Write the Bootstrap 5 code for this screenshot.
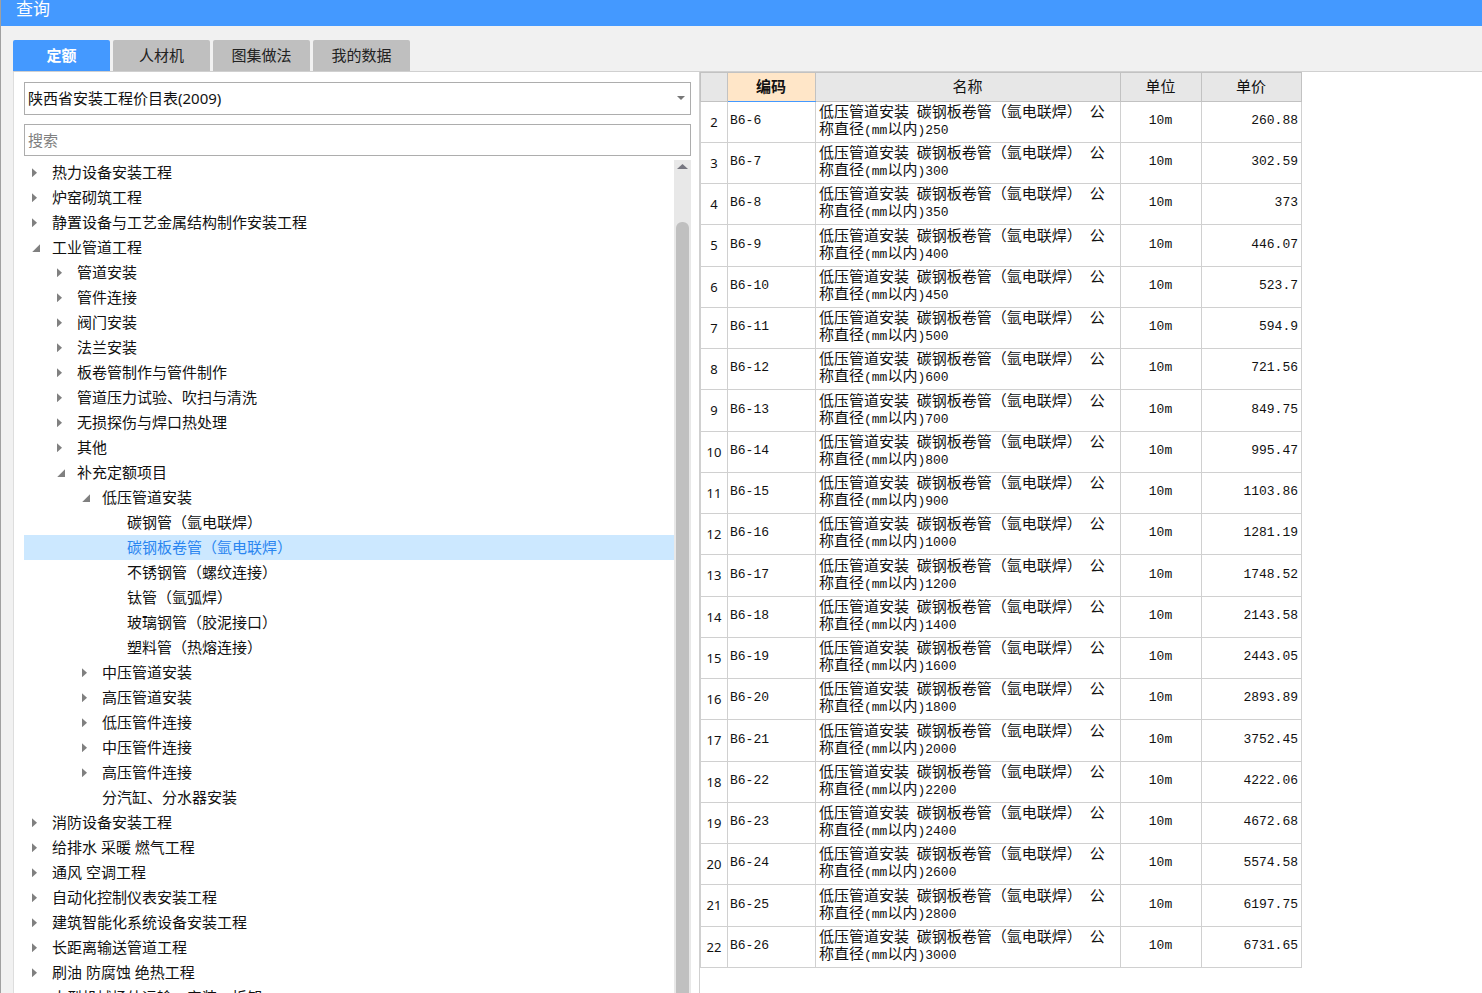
<!DOCTYPE html>
<html lang="zh-CN">
<head>
<meta charset="utf-8">
<meta name="viewport" content="width=device-width, initial-scale=1">
<title>查询</title>
<link href="https://cdn.jsdelivr.net/npm/bootstrap@5.3.0/dist/css/bootstrap.min.css" rel="stylesheet">
<style>
body{font-family:"Noto Sans","Noto Sans CJK SC",sans-serif;font-size:15px;line-height:25px;color:#111;background:#f1f1f1}
.window{border-left:1px solid #a0a0a0}
.titlebar{height:26px;background:#4499ff;color:#fff;font-size:17px;line-height:18px;padding-left:15px}
.workspace{padding:14px 0 0 12px}
.tabs{gap:3px}
.tabs .nav-link{width:97px;height:31px;padding:0;border:0;line-height:31px;border-radius:2px 2px 0 0;background:#bfbfbf;color:#222;text-align:center}
.tabs .nav-link.active{background:#4499ff;color:#fff;font-weight:700}
.panes{display:grid;grid-template-columns:687fr 782fr;grid-template-rows:minmax(0,1fr);border-top:1px solid #d0d0d0;background:#fff;min-height:0}
.catalog{padding:10px 8px 0 10px;border-left:1px solid #ddd;border-right:1px solid #d0d0d0;min-height:0}
.catalog .form-select,.catalog .form-control{height:33px;padding:0 3px;border:1px solid #adadad;border-radius:0;font-size:15px;line-height:29px;color:#111;background-color:#fff}
.catalog .form-select{background-image:none;appearance:none}
.catalog .form-control{margin-top:9px}
.catalog .form-control::placeholder{color:#808080}
.caret{right:6px;top:14px}
.tree-box{margin-top:4px;min-height:0}
.tree{min-width:0}
.tree ul{list-style:none;margin:0;padding:0}
.tree a{display:flex;align-items:center;height:25px;padding-left:8px;color:#111;text-decoration:none;white-space:nowrap}
.tree ul ul a{padding-left:33px}
.tree ul ul ul a{padding-left:58px}
.tree ul ul ul ul a{padding-left:83px}
.tree a::before{content:"";flex:none;width:20px;height:9px;background:#808080}
.tree a.shut::before{clip-path:polygon(0 0,5px 50%,0 100%)}
.tree a.open::before{clip-path:polygon(8px 1px,8px 100%,0 100%)}
.tree a.leaf::before{background:none}
.tree a.picked{background:#cce8ff;color:#2a85f0}
.scrollbar{width:17px;background:#e8e8e8;padding:4px 2px 0}
.scrollbar svg{flex:none;margin:0 auto 53px}
.thumb{background:#c0c0c0;border-radius:6px 6px 0 0;width:13px}
.items{width:602px;table-layout:fixed;border-collapse:collapse;font-family:"Liberation Mono","Noto Sans CJK SC",monospace;font-size:13px;line-height:17px;color:#111}
.items th,.items td{border:1px solid #d0d0d0;padding:0 3px 3px 2px;height:41px;vertical-align:middle}
.items tbody tr:nth-child(4n) td{height:42px}
.items thead th{height:29px;padding:3px 3px 0 2px;background:#e7e7e7;border-color:#c2c2c2;font-size:15px;font-weight:400;text-align:center}
.items thead th.sorted{background:#ffe6c8;font-weight:700;border-bottom-color:#4499ff}
.items tbody th{font-weight:400;font-size:13px;font-family:"Noto Sans",sans-serif;text-align:center;padding:0}
.items i{font-style:normal;font-size:15px}
.items td:nth-child(3){padding:0 2px 0 3px}
.items td:nth-child(4){text-align:center}
.items td:nth-child(5){text-align:right}
</style>
</head>
<body>
<div class="window vh-100 d-flex flex-column overflow-hidden">
<header class="titlebar flex-shrink-0">查询</header>
<main class="workspace d-flex flex-column flex-fill overflow-hidden">
<nav class="tabs nav flex-shrink-0">
<button type="button" class="nav-link active">定额</button>
<button type="button" class="nav-link">人材机</button>
<button type="button" class="nav-link">图集做法</button>
<button type="button" class="nav-link">我的数据</button>
</nav>
<div class="panes flex-fill">
<section class="catalog d-flex flex-column">
<div class="position-relative">
<select class="form-select" aria-label="定额库"><option>陕西省安装工程价目表(2009)</option></select>
<svg class="caret position-absolute pe-none" width="8" height="5"><path d="M0 0h8L4 4z" fill="#777"/></svg>
</div>
<input class="form-control" type="text" placeholder="搜索" aria-label="搜索">
<div class="tree-box d-flex flex-fill overflow-hidden">
<nav class="tree flex-fill overflow-hidden" aria-label="定额目录">
<ul>
<li><a class="shut" href="#">热力设备安装工程</a></li>
<li><a class="shut" href="#">炉窑砌筑工程</a></li>
<li><a class="shut" href="#">静置设备与工艺金属结构制作安装工程</a></li>
<li><a class="open" href="#">工业管道工程</a>
<ul>
<li><a class="shut" href="#">管道安装</a></li>
<li><a class="shut" href="#">管件连接</a></li>
<li><a class="shut" href="#">阀门安装</a></li>
<li><a class="shut" href="#">法兰安装</a></li>
<li><a class="shut" href="#">板卷管制作与管件制作</a></li>
<li><a class="shut" href="#">管道压力试验、吹扫与清洗</a></li>
<li><a class="shut" href="#">无损探伤与焊口热处理</a></li>
<li><a class="shut" href="#">其他</a></li>
<li><a class="open" href="#">补充定额项目</a>
<ul>
<li><a class="open" href="#">低压管道安装</a>
<ul>
<li><a class="leaf" href="#">碳钢管（氩电联焊）</a></li>
<li><a class="leaf picked" href="#">碳钢板卷管（氩电联焊）</a></li>
<li><a class="leaf" href="#">不锈钢管（螺纹连接）</a></li>
<li><a class="leaf" href="#">钛管（氩弧焊）</a></li>
<li><a class="leaf" href="#">玻璃钢管（胶泥接口）</a></li>
<li><a class="leaf" href="#">塑料管（热熔连接）</a></li>
</ul></li>
<li><a class="shut" href="#">中压管道安装</a></li>
<li><a class="shut" href="#">高压管道安装</a></li>
<li><a class="shut" href="#">低压管件连接</a></li>
<li><a class="shut" href="#">中压管件连接</a></li>
<li><a class="shut" href="#">高压管件连接</a></li>
<li><a class="leaf" href="#">分汽缸、分水器安装</a></li>
</ul></li>
</ul></li>
<li><a class="shut" href="#">消防设备安装工程</a></li>
<li><a class="shut" href="#">给排水 采暖 燃气工程</a></li>
<li><a class="shut" href="#">通风 空调工程</a></li>
<li><a class="shut" href="#">自动化控制仪表安装工程</a></li>
<li><a class="shut" href="#">建筑智能化系统设备安装工程</a></li>
<li><a class="shut" href="#">长距离输送管道工程</a></li>
<li><a class="shut" href="#">刷油 防腐蚀 绝热工程</a></li>
<li><a class="shut" href="#">大型机械场外运输、安装、拆卸</a></li>
</ul>
</nav>
<div class="scrollbar d-flex flex-column flex-shrink-0">
<svg width="11" height="5"><path d="M5.500 0L11 5H0z" fill="#777781"/></svg>
<div class="thumb flex-fill"></div>
</div>
</div>
</section>
<section class="overflow-hidden">
<table class="items">
<colgroup><col style="width:27px"><col style="width:88px"><col style="width:305px"><col style="width:81px"><col style="width:100px"></colgroup>
<thead><tr><th></th><th class="sorted" scope="col">编码</th><th scope="col">名称</th><th scope="col">单位</th><th scope="col">单价</th></tr></thead>
<tbody>
<tr><th scope="row">2</th><td>B6-6</td><td><i>低压管道安装</i> <i>碳钢板卷管（氩电联焊）</i> <i>公称直径</i>(mm<i>以内</i>)250</td><td>10m</td><td>260.88</td></tr>
<tr><th scope="row">3</th><td>B6-7</td><td><i>低压管道安装</i> <i>碳钢板卷管（氩电联焊）</i> <i>公称直径</i>(mm<i>以内</i>)300</td><td>10m</td><td>302.59</td></tr>
<tr><th scope="row">4</th><td>B6-8</td><td><i>低压管道安装</i> <i>碳钢板卷管（氩电联焊）</i> <i>公称直径</i>(mm<i>以内</i>)350</td><td>10m</td><td>373</td></tr>
<tr><th scope="row">5</th><td>B6-9</td><td><i>低压管道安装</i> <i>碳钢板卷管（氩电联焊）</i> <i>公称直径</i>(mm<i>以内</i>)400</td><td>10m</td><td>446.07</td></tr>
<tr><th scope="row">6</th><td>B6-10</td><td><i>低压管道安装</i> <i>碳钢板卷管（氩电联焊）</i> <i>公称直径</i>(mm<i>以内</i>)450</td><td>10m</td><td>523.7</td></tr>
<tr><th scope="row">7</th><td>B6-11</td><td><i>低压管道安装</i> <i>碳钢板卷管（氩电联焊）</i> <i>公称直径</i>(mm<i>以内</i>)500</td><td>10m</td><td>594.9</td></tr>
<tr><th scope="row">8</th><td>B6-12</td><td><i>低压管道安装</i> <i>碳钢板卷管（氩电联焊）</i> <i>公称直径</i>(mm<i>以内</i>)600</td><td>10m</td><td>721.56</td></tr>
<tr><th scope="row">9</th><td>B6-13</td><td><i>低压管道安装</i> <i>碳钢板卷管（氩电联焊）</i> <i>公称直径</i>(mm<i>以内</i>)700</td><td>10m</td><td>849.75</td></tr>
<tr><th scope="row">10</th><td>B6-14</td><td><i>低压管道安装</i> <i>碳钢板卷管（氩电联焊）</i> <i>公称直径</i>(mm<i>以内</i>)800</td><td>10m</td><td>995.47</td></tr>
<tr><th scope="row">11</th><td>B6-15</td><td><i>低压管道安装</i> <i>碳钢板卷管（氩电联焊）</i> <i>公称直径</i>(mm<i>以内</i>)900</td><td>10m</td><td>1103.86</td></tr>
<tr><th scope="row">12</th><td>B6-16</td><td><i>低压管道安装</i> <i>碳钢板卷管（氩电联焊）</i> <i>公称直径</i>(mm<i>以内</i>)1000</td><td>10m</td><td>1281.19</td></tr>
<tr><th scope="row">13</th><td>B6-17</td><td><i>低压管道安装</i> <i>碳钢板卷管（氩电联焊）</i> <i>公称直径</i>(mm<i>以内</i>)1200</td><td>10m</td><td>1748.52</td></tr>
<tr><th scope="row">14</th><td>B6-18</td><td><i>低压管道安装</i> <i>碳钢板卷管（氩电联焊）</i> <i>公称直径</i>(mm<i>以内</i>)1400</td><td>10m</td><td>2143.58</td></tr>
<tr><th scope="row">15</th><td>B6-19</td><td><i>低压管道安装</i> <i>碳钢板卷管（氩电联焊）</i> <i>公称直径</i>(mm<i>以内</i>)1600</td><td>10m</td><td>2443.05</td></tr>
<tr><th scope="row">16</th><td>B6-20</td><td><i>低压管道安装</i> <i>碳钢板卷管（氩电联焊）</i> <i>公称直径</i>(mm<i>以内</i>)1800</td><td>10m</td><td>2893.89</td></tr>
<tr><th scope="row">17</th><td>B6-21</td><td><i>低压管道安装</i> <i>碳钢板卷管（氩电联焊）</i> <i>公称直径</i>(mm<i>以内</i>)2000</td><td>10m</td><td>3752.45</td></tr>
<tr><th scope="row">18</th><td>B6-22</td><td><i>低压管道安装</i> <i>碳钢板卷管（氩电联焊）</i> <i>公称直径</i>(mm<i>以内</i>)2200</td><td>10m</td><td>4222.06</td></tr>
<tr><th scope="row">19</th><td>B6-23</td><td><i>低压管道安装</i> <i>碳钢板卷管（氩电联焊）</i> <i>公称直径</i>(mm<i>以内</i>)2400</td><td>10m</td><td>4672.68</td></tr>
<tr><th scope="row">20</th><td>B6-24</td><td><i>低压管道安装</i> <i>碳钢板卷管（氩电联焊）</i> <i>公称直径</i>(mm<i>以内</i>)2600</td><td>10m</td><td>5574.58</td></tr>
<tr><th scope="row">21</th><td>B6-25</td><td><i>低压管道安装</i> <i>碳钢板卷管（氩电联焊）</i> <i>公称直径</i>(mm<i>以内</i>)2800</td><td>10m</td><td>6197.75</td></tr>
<tr><th scope="row">22</th><td>B6-26</td><td><i>低压管道安装</i> <i>碳钢板卷管（氩电联焊）</i> <i>公称直径</i>(mm<i>以内</i>)3000</td><td>10m</td><td>6731.65</td></tr>
</tbody>
</table>
</section>
</div>
</main>
</div>
<script src="https://cdn.jsdelivr.net/npm/bootstrap@5.3.0/dist/js/bootstrap.bundle.min.js"></script>
</body>
</html>
